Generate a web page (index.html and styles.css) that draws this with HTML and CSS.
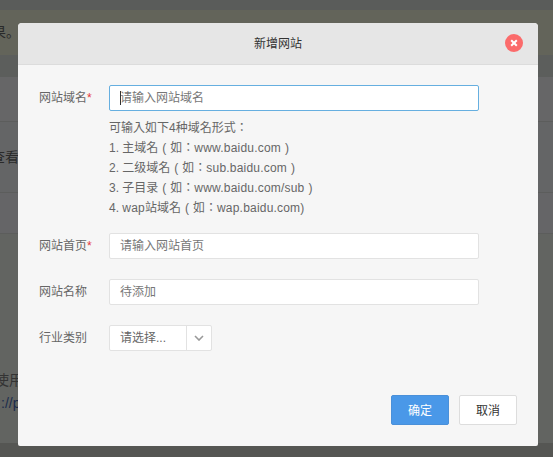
FILE: index.html
```html
<!DOCTYPE html>
<html lang="zh-CN">
<head>
    <meta charset="UTF-8">
    <title>新增网站</title>
    <link rel="stylesheet" href="styles.css">
</head>
<body>
    <div class="page">
        <div class="band band-top"></div>
        <div class="band band-notice"><span class="cut-text">果。</span></div>
        <div class="band band-head"></div>
        <div class="band band-row-a"></div>
        <div class="band band-row-b"><span class="cut-text cut-look">查看</span></div>
        <div class="band band-row-c"></div>
        <div class="band band-body">
            <p class="cut-text cut-use">使用</p>
            <p class="cut-text cut-link">://pa</p>
        </div>
        <div class="band band-bottom"></div>
    </div>

    <div class="modal">
        <div class="modal-header">
            <h3>新增网站</h3>
            <span class="close-btn">
                <svg width="8" height="8" viewBox="0 0 8 8"><path d="M1.2 1.2l5.6 5.6M6.8 1.2L1.2 6.8" stroke="#fff" stroke-width="2"/></svg>
            </span>
        </div>
        <div class="modal-body">
            <div class="form-row form-row-first">
                <label>网站域名<em>*</em></label>
                <div class="field">
                    <div class="input input-focus"><i class="caret"></i>请输入网站域名</div>
                    <div class="hint" lang="zh-TW">
                        <p>可输入如下4种域名形式：</p>
                        <p>1. 主域名<b class="paren">(</b>如：<span class="latin">www.baidu.com</span><b class="paren">)</b></p>
                        <p>2. 二级域名<b class="paren">(</b>如：<span class="latin">sub.baidu.com</span><b class="paren">)</b></p>
                        <p>3. 子目录<b class="paren">(</b>如：<span class="latin">www.baidu.com/sub</span><b class="paren">)</b></p>
                        <p>4. <span class="latin">wap</span>站域名<b class="paren">(</b>如：<span class="latin">wap.baidu.com)</span></p>
                    </div>
                </div>
            </div>
            <div class="form-row">
                <label>网站首页<em>*</em></label>
                <div class="field"><div class="input">请输入网站首页</div></div>
            </div>
            <div class="form-row">
                <label>网站名称</label>
                <div class="field"><div class="input">待添加</div></div>
            </div>
            <div class="form-row">
                <label>行业类别</label>
                <div class="select">
                    <span class="select-text">请选择...</span>
                    <span class="select-arrow">
                        <svg width="10" height="6" viewBox="0 0 10 6"><path d="M1 1l4 4 4-4" fill="none" stroke="#999" stroke-width="1.6"/></svg>
                    </span>
                </div>
            </div>
        </div>
        <div class="modal-footer">
            <button class="btn btn-primary">确定</button>
            <button class="btn">取消</button>
        </div>
    </div>
</body>
</html>
```

FILE: styles.css
```css
* {
    box-sizing: border-box;
}

html, body {
    margin: 0;
    padding: 0;
    height: 457px;
    overflow: hidden;
}

body {
    font-family: "Liberation Sans", "Noto Sans CJK SC", sans-serif;
    font-size: 12px;
    color: #666;
    background: #626461;
}

.page {
    display: flex;
    flex-direction: column;
    height: 457px;
}

.band-top {
    height: 10px;
    background: #5a5c5a;
}

.band-notice {
    height: 45px;
    background: #63645a;
    padding-top: 14px;
}

.band-head {
    height: 22px;
    background: #5c5e5c;
}

.band-row-a {
    height: 45px;
    background: #666667;
    border-bottom: 1px solid #5c5d5c;
}

.band-row-b {
    height: 71px;
    background: #646566;
    border-bottom: 1px solid #5c5d5c;
    padding-top: 27px;
}

.band-row-c {
    height: 41px;
    background: #656567;
    border-bottom: 1px solid #5c5d5c;
}

.band-body {
    flex: 1;
    background: #626461;
}

.band-bottom {
    height: 14px;
    background: #555653;
}

.cut-text {
    display: block;
    margin: 0 0 0 -8px;
    color: #2a2a2a;
    font-size: 14px;
    line-height: 16px;
    white-space: nowrap;
}

.cut-look {
    margin-left: -9px;
}

.cut-use {
    margin: 0 0 7px -5px;
    padding-top: 138px;
    color: #333;
}

.cut-link {
    margin-left: 1px;
    color: #1c2c4c;
}

.modal {
    position: absolute;
    left: 18px;
    top: 23px;
    width: 520px;
    height: 423px;
    background: #f6f6f6;
    border-radius: 4px 4px 2px 2px;
    display: flex;
    flex-direction: column;
}

.modal-header {
    height: 42px;
    flex: none;
    background: #e6e6e6;
    border-bottom: 1px solid #dcdcdc;
    border-radius: 4px 4px 0 0;
    padding-bottom: 2px;
    display: flex;
    align-items: center;
    justify-content: center;
    position: relative;
}

.modal-header h3 {
    margin: 0;
    font-size: 12px;
    font-weight: normal;
    color: #333;
}

.close-btn {
    position: absolute;
    right: 15px;
    top: 11px;
    width: 18px;
    height: 18px;
    border-radius: 50%;
    background: #fb6b6b;
    display: flex;
    align-items: center;
    justify-content: center;
}

.modal-body {
    flex: 1;
    padding: 20px 59px 0 21px;
}

.form-row {
    display: flex;
    margin-bottom: 20px;
}

.form-row-first {
    margin-bottom: 15px;
}

.form-row label {
    width: 70px;
    flex: none;
    line-height: 26px;
    color: #666;
}

.form-row label em {
    color: #e4393c;
    font-style: normal;
}

.field {
    flex: 1;
}

.input {
    height: 26px;
    line-height: 24px;
    padding-left: 10px;
    background: #fff;
    border: 1px solid #e2e2e2;
    border-radius: 2px;
    color: #777;
    position: relative;
}

.input-focus {
    border-color: #66afe0;
}

.caret {
    position: absolute;
    left: 10px;
    top: 5px;
    width: 1px;
    height: 14px;
    background: #333;
}

.hint {
    margin-top: 7px;
    color: #666;
    font-family: "Liberation Sans", "Noto Sans CJK TC", sans-serif;
}

.hint p {
    margin: 0;
    line-height: 20px;
}

.paren {
    display: inline-block;
    width: 12px;
    text-align: center;
    font-weight: normal;
}

.latin {
    letter-spacing: 0.2px;
}

.select {
    display: flex;
    height: 26px;
    line-height: 24px;
    background: #fff;
    border: 1px solid #e2e2e2;
    border-radius: 2px;
}

.select-text {
    width: 77px;
    padding-left: 10px;
    color: #666;
    border-right: 1px solid #e2e2e2;
}

.select-arrow {
    width: 24px;
    display: flex;
    align-items: center;
    justify-content: center;
}

.modal-footer {
    display: flex;
    justify-content: flex-end;
    gap: 10px;
    padding: 0 21px 21px 0;
}

.btn {
    width: 58px;
    height: 30px;
    font: inherit;
    color: #333;
    background: #fff;
    border: 1px solid #ddd;
    border-radius: 2px;
    padding: 0 0 2px;
}

.btn-primary {
    color: #fff;
    background: #4a98e8;
    border-color: #4a90d9;
}
```
